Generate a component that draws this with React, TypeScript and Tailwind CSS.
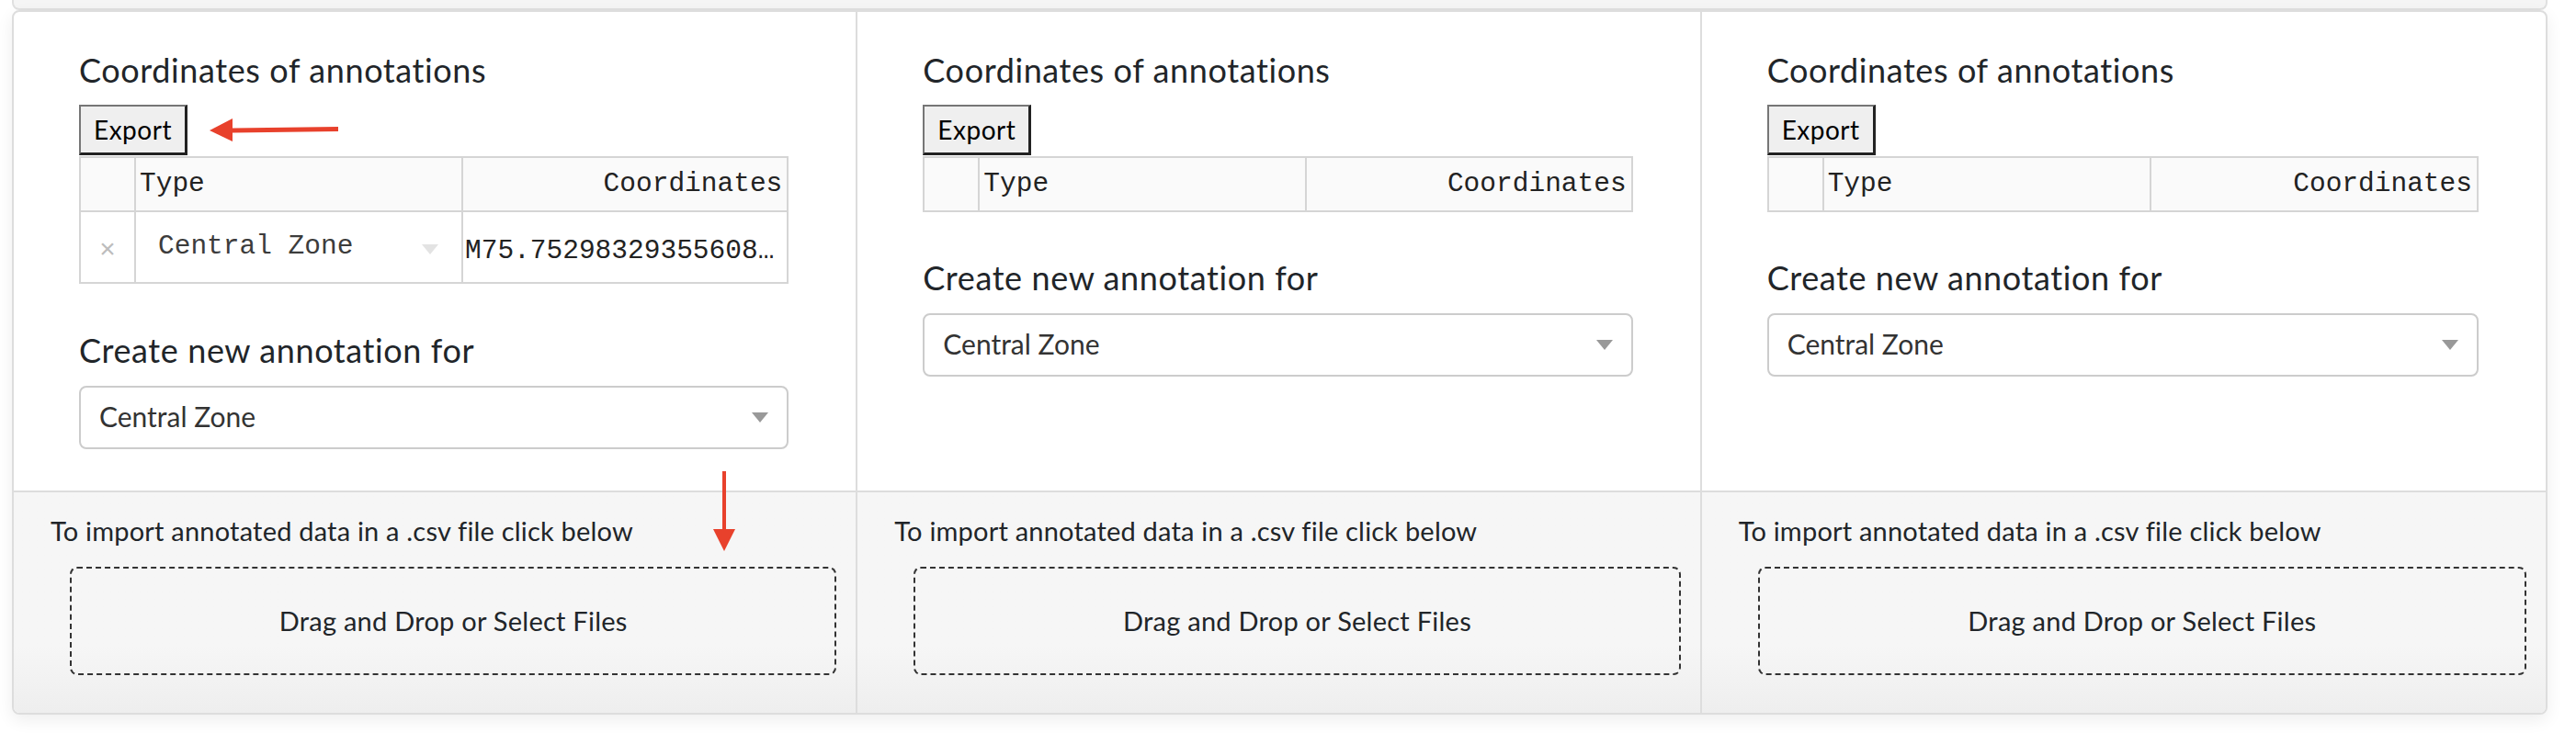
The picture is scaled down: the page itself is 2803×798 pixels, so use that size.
const sans = { fontFamily: "Lato, 'Open Sans', sans-serif" };
const mono = { fontFamily: "'Liberation Mono', 'DejaVu Sans Mono', monospace" };

function Caret({ className }: { className: string }) {
  return (
    <svg width="18" height="11" viewBox="0 0 18 11" className={className}>
      <polygon points="0,0 18,0 9,11" fill="currentColor" />
    </svg>
  );
}

function AnnotationColumn({ withRow, arrows }: { withRow?: boolean; arrows?: boolean }) {
  return (
    <div className="relative flex flex-col" style={sans}>
      <div className="h-[521px] pl-[71px] pr-[73px] pt-[42px] text-[#212529]">
        <h5 className="text-[36px] leading-[43px] tracking-[0.6px]">Coordinates of annotations</h5>
        <button className="mt-[16px] flex h-[55px] items-center border-t-2 border-l-2 border-r-[3px] border-b-[3px] border-t-[#767676] border-l-[#767676] border-r-[#222] border-b-[#222] bg-[#efefef] px-[14px] text-[28px] tracking-[0.5px] text-black">
          Export
        </button>
        <div className="mt-[1px] border-2 border-[#d5d5d5]" style={mono}>
          <div className="flex h-[57px] items-center bg-[#fafafa] text-[29.5px] text-[#222]">
            <div className="h-full w-[60px] border-r-2 border-[#d5d5d5]" />
            <div className="flex h-full w-[356px] items-center border-r-2 border-[#d5d5d5] pl-[4px]">Type</div>
            <div className="flex h-full flex-1 items-center justify-end pr-[5px]">Coordinates</div>
          </div>
          {withRow && (
            <div className="flex h-[78px] border-t-2 border-[#d5d5d5] text-[29.5px] text-[#333]">
              <div className="flex w-[60px] items-center justify-center border-r-2 border-[#d5d5d5] pt-[8px] text-[30px] text-[#bdbdbd]">×</div>
              <div className="flex w-[356px] items-center border-r-2 border-[#d5d5d5] pb-[2px] pl-[24px] pr-[25px]">
                <span className="flex-1 text-[#3c3c3c]">Central Zone</span>
                <Caret className="mt-[6px] text-[#e3e3e3]" />
              </div>
              <div className="flex flex-1 items-center overflow-hidden whitespace-nowrap pl-[2px] pt-[8px] text-[#222]">
                M75.75298329355608…
              </div>
            </div>
          )}
        </div>
        <h5 className={`${withRow ? "mt-[51px]" : "mt-[50px]"} text-[36px] leading-[43px] tracking-[0.6px]`}>
          Create new annotation for
        </h5>
        <div className="mt-[17px] flex h-[69px] items-center rounded-[8px] border-2 border-[#cccccc] bg-white pl-[20px] pr-[20px] text-[30px] text-[#333]">
          <span className="flex-1 pb-[2px]">Central Zone</span>
          <Caret className="text-[#999]" />
        </div>
      </div>

      <div className="h-[242px] border-t-2 border-[#dddddd] bg-gradient-to-b from-[#f6f6f6] from-70% to-[#eeeeee] text-[#212529]">
        <p className="pl-[40px] pt-[24px] text-[29px] leading-[35px] tracking-[0.2px]">
          To import annotated data in a .csv file click below
        </p>
        <div className="ml-[61px] mr-[21px] mt-[22px] flex h-[118px] items-center justify-center rounded-[8px] border-2 border-dashed border-[#333] text-[29px] tracking-[0.25px]">
          Drag and Drop or Select Files
        </div>
      </div>

      {arrows && (
        <>
          <svg width="144" height="27" viewBox="0 0 144 27" className="absolute left-[211px] top-[115px]">
            <line x1="22" y1="14" x2="142" y2="12.5" stroke="#e8412c" strokeWidth="5" />
            <polygon points="2,14 27,1 27,26" fill="#e8412c" />
          </svg>
          <svg width="28" height="88" viewBox="0 0 28 88" className="absolute left-[759px] top-[500px]">
            <line x1="14" y1="0" x2="14" y2="68" stroke="#e8412c" strokeWidth="4" />
            <polygon points="2,63 26,63 14,87" fill="#e8412c" />
          </svg>
        </>
      )}
    </div>
  );
}

export default function App() {
  return (
    <div className="h-[798px] w-[2803px] overflow-hidden bg-white">
      <div className="ml-[13px] h-[11px] w-[2759px] rounded-b-[8px] border-x-2 border-b-2 border-[#e0e0e0] bg-[#f5f5f5]" />
      <div className="ml-[13px] w-[2759px] overflow-hidden rounded-[8px] border-2 border-[#dddddd] bg-white shadow-[0_6px_18px_rgba(0,0,0,0.07)]">
        <div className="grid grid-cols-3 divide-x-2 divide-[#dddddd]">
          <AnnotationColumn withRow arrows />
          <AnnotationColumn />
          <AnnotationColumn />
        </div>
      </div>
    </div>
  );
}
